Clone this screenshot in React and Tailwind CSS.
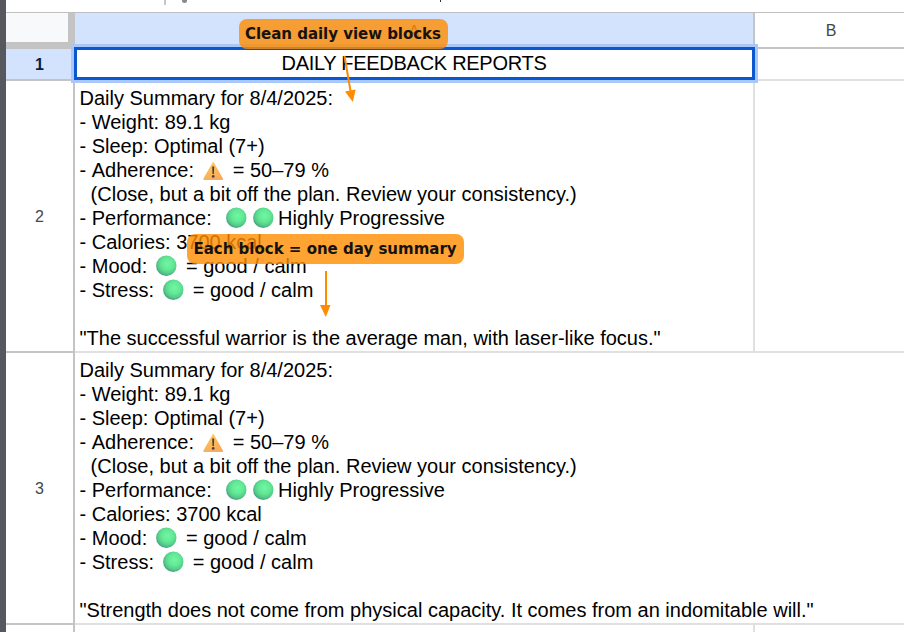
import React from "react";

const GreenCircle = () => (
  <svg className="inline-block h-[22px] w-[27.6px] overflow-visible align-[-4px]" viewBox="0 0 27.6 22">
    <defs>
      <radialGradient id="ball" cx="0.56" cy="0.4" r="0.62">
        <stop offset="0" stopColor="#6ff7a1" />
        <stop offset="0.45" stopColor="#64e996" />
        <stop offset="0.75" stopColor="#55cf89" />
        <stop offset="1" stopColor="#459a80" />
      </radialGradient>
    </defs>
    <circle cx="13.3" cy="10.8" r="10.2" fill="url(#ball)" />
  </svg>
);

const Warning = () => (
  <svg className="inline-block h-[22px] w-[27.6px] overflow-visible align-[-4px]" viewBox="0.6 -0.4 27.6 22">
    <defs>
      <linearGradient id="warn" x1="0" y1="0" x2="0.4" y2="1">
        <stop offset="0" stopColor="#ffc95e" />
        <stop offset="1" stopColor="#f9ad5c" />
      </linearGradient>
    </defs>
    <path d="M13.2 3Q13.8 2 14.4 3L23.7 19.4Q24.1 20.5 23 20.5H4.6Q3.5 20.5 3.9 19.4Z" fill="url(#warn)" />
    <path d="M12.8 7.2h2l-.3 7.4h-1.4z" fill="#4b4038" />
    <circle cx="13.8" cy="17" r="1.3" fill="#4b4038" />
  </svg>
);

const Summary = ({ quote }) => (
  <div className="whitespace-pre pl-[4.5px] pt-[5px] text-[20px] leading-[24px] text-black">
    <div className="h-6">Daily Summary for 8/4/2025:</div>
    <div className="h-6">- Weight: 89.1 kg</div>
    <div className="h-6">- Sleep: Optimal (7+)</div>
    <div className="h-6 [font-kerning:none]">{"- Adherence: "}<Warning />{" = 50–79 %"}</div>
    <div className="h-6">{"  (Close, but a bit off the plan. Review your consistency.)"}</div>
    <div className="h-6">{"- Performance:  "}<GreenCircle /><GreenCircle />Highly Progressive</div>
    <div className="h-6">- Calories: 3700 kcal</div>
    <div className="h-6">{"- Mood: "}<GreenCircle />{" = good / calm"}</div>
    <div className="h-6">{"- Stress: "}<GreenCircle />{" = good / calm"}</div>
    <div className="h-6" />
    <div className="h-6">{quote}</div>
  </div>
);

const RowNumber = ({ children }) => (
  <div className="flex w-[69px] shrink-0 items-center justify-center border-b-2 border-r-2 border-[#c4c4c4] pt-0.5 text-[16px] text-[#444746]">
    {children}
  </div>
);

export default function App() {
  return (
    <div className="relative flex h-[632px] w-[904px] overflow-hidden bg-white font-['Liberation_Sans',Arial,sans-serif]">
      <div className="w-1.5 shrink-0 bg-[#57585d]" />
      <div className="flex w-[898px] shrink-0 flex-col">
        <div className="relative h-[13px] shrink-0 border-b border-[#c0c0c0]">
          <div className="absolute left-[158px] top-0 h-[5px] w-[2px] bg-[#c7c7c7]" />
          <div className="absolute left-[176px] top-0 h-[3px] w-[5px] rounded-b-full bg-[#888]" />
          <div className="absolute left-[434px] top-0 h-[2px] w-px bg-[#333]" />
        </div>
        <div className="flex h-9 shrink-0">
          <div className="w-[69px] shrink-0 border-b-[7px] border-r-[7px] border-[#c4c4c4] bg-[#f8f9fa]" />
          <div className="flex w-[680px] shrink-0 items-center justify-center border-r-2 border-[#c4c4c4] bg-[#d3e3fd] pt-px text-[16px] text-[#444746]">A</div>
          <div className="flex grow items-center justify-center border-b-2 border-[#c4c4c4] pt-0.5 text-[16px] text-[#444746]">
            <span className="pl-[3px]">B</span>
          </div>
        </div>
        <div className="flex h-8 shrink-0">
          <div className="flex w-[69px] shrink-0 items-center justify-center border-b-2 border-r-2 border-[#c4c4c4] bg-[#d3e3fd] pt-0.5 text-[16px] font-bold text-[#041e49]">1</div>
          <div className="flex w-[680px] shrink-0 items-center justify-center border-b-2 border-r-2 border-[#e0e0e0] pb-0.5 text-[20px] leading-6 tracking-[-0.28px] text-black">DAILY FEEDBACK REPORTS</div>
          <div className="grow border-b-2 border-[#e0e0e0]" />
        </div>
        <div className="flex h-[272px] shrink-0">
          <RowNumber>2</RowNumber>
          <div className="w-[680px] shrink-0 border-b-2 border-r-2 border-[#e0e0e0]">
            <Summary quote={'"The successful warrior is the average man, with laser-like focus."'} />
          </div>
          <div className="grow border-b-2 border-[#e0e0e0]" />
        </div>
        <div className="flex h-[272px] shrink-0">
          <RowNumber>3</RowNumber>
          <div className="grow border-b-2 border-[#e0e0e0]">
            <Summary quote={'"Strength does not come from physical capacity. It comes from an indomitable will."'} />
          </div>
        </div>
        <div className="flex h-[7px] shrink-0">
          <div className="w-[69px] border-r-2 border-[#c4c4c4]" />
          <div className="w-[680px] border-r-2 border-[#e0e0e0]" />
        </div>
      </div>

      <div className="absolute left-[71px] top-[44px] h-[39px] w-[687px] border-[3px] border-[#a8c7fa]">
        <div className="h-full w-full border-[3px] border-[#0b57d0]" />
      </div>

      <div className="absolute left-[239px] top-[19px] flex h-[30px] w-[209px] items-center justify-center whitespace-nowrap rounded-[8px] bg-[#ff8c00]/80 pr-px font-['DejaVu_Sans',sans-serif] text-[15px] font-bold tracking-[-0.03px] text-[#15120f]">Clean daily view blocks</div>
      <div className="absolute left-[187px] top-[234px] flex h-[30px] w-[277px] items-center justify-center whitespace-nowrap rounded-[8px] bg-[#ff8c00]/80 pr-px font-['DejaVu_Sans',sans-serif] text-[15px] font-bold text-[#15120f]">Each block = one day summary</div>
      <svg className="absolute left-[340px] top-[50px]" width="20" height="56" viewBox="340 50 20 56">
        <path d="M344.5 56L350.7 92" stroke="#ff8c00" strokeWidth="2" />
        <path d="M345 91.5L355.7 89.5L352.8 102Z" fill="#ff8c00" />
      </svg>
      <svg className="absolute left-[316px] top-[268px]" width="20" height="52" viewBox="316 268 20 52">
        <path d="M326 271V306" stroke="#ff8c00" strokeWidth="2" />
        <path d="M320 305H330.5L325.8 317Z" fill="#ff8c00" />
      </svg>
    </div>
  );
}
